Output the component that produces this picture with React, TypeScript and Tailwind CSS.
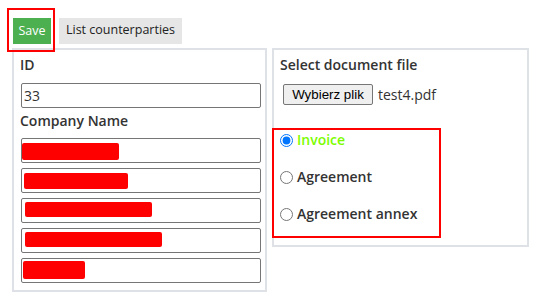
import React from "react";

interface Redaction {
  left: number;
  top: number;
  width: number;
  height: number;
}

// Hidden company names (red marks over the field values)
const names: Redaction[] = [
  { left: 1, top: 5, width: 97, height: 17 },
  { left: 3, top: 5, width: 104, height: 16 },
  { left: 4, top: 4, width: 127, height: 15 },
  { left: 4, top: 4, width: 137, height: 15 },
  { left: 2, top: 3, width: 62, height: 18 },
];

const docTypes = ["Invoice", "Agreement", "Agreement annex"];

export default function App() {
  return (
    <div className="min-h-screen bg-white px-[12px] pt-[17px] text-[#333] font-['Open_Sans',sans-serif]">
      {/* Toolbar */}
      <div className="flex items-center gap-[8px]">
        <div className="relative ml-[1px]">
          <button className="h-[26px] w-[38px] bg-[#4caf50] text-[12.5px] text-white">
            Save
          </button>
          <span className="pointer-events-none absolute -left-[6px] -top-[9px] -right-[4px] -bottom-[8px] z-10 border-2 border-[#f00]" />
        </div>
        <button className="h-[26px] w-[123px] bg-[#e6e6e6] text-[12.5px] text-[#222]">
          List counterparties
        </button>
      </div>

      {/* Panels */}
      <div className="mt-[4px] flex items-start gap-[5px]">
        {/* Counterparty */}
        <div className="w-[255px] border-2 border-[#dee2e6] pt-[5px] pb-[7px] pl-[6px] pr-[4px]">
          <div className="text-[14px] font-semibold leading-[20px]">ID</div>
          <input
            readOnly
            defaultValue="33"
            className="mt-[8px] ml-[1px] block h-[25px] w-[240px] rounded-[2px] border border-[#767676] pl-[2px] text-[14px] text-[#333] outline-none"
          />
          <div className="mt-[3px] text-[14px] font-semibold leading-[20px]">Company Name</div>
          <div className="mt-[7px] ml-[1px] flex flex-col gap-[5px]">
            {names.map((r, i) => (
              <div key={i} className="relative h-[25px] w-[240px] rounded-[2px] border border-[#767676]">
                <span
                  className="absolute rounded-[2px] bg-[#f00]"
                  style={{ left: r.left - 1, top: r.top - 1, width: r.width, height: r.height }}
                />
              </div>
            ))}
          </div>
        </div>

        {/* Document */}
        <div className="w-[257px] border-2 border-[#dee2e6] pt-[5px] pb-[7px] pl-[6px]">
          <div className="text-[14px] font-semibold leading-[20px]">Select document file</div>
          <div className="mt-[9px] flex h-[21px] items-center">
            <span className="ml-[3px] flex h-[21px] w-[90px] items-center justify-center rounded-[2px] border border-[#767676] bg-[#efefef] text-[13.33px] text-black font-['Liberation_Sans',Arial,sans-serif]">
              Wybierz plik
            </span>
            <span className="ml-[5px] text-[14px]">test4.pdf</span>
          </div>
          <div className="-ml-[8px] mt-[23px] flex h-[110px] w-[169px] flex-col gap-[17px] border-2 border-[#f00] pl-[6px]">
            {docTypes.map((t, i) => (
              <label key={t} className="flex h-[20px] items-center gap-[4px]">
                <input type="radio" name="doctype" defaultChecked={i === 0} className="h-[13px] w-[13px]" />
                <span
                  className={`text-[14px] font-semibold leading-[20px] ${i === 0 ? "text-[#7cfc00]" : "text-[#333]"}`}
                >
                  {t}
                </span>
              </label>
            ))}
          </div>
        </div>
      </div>
    </div>
  );
}
